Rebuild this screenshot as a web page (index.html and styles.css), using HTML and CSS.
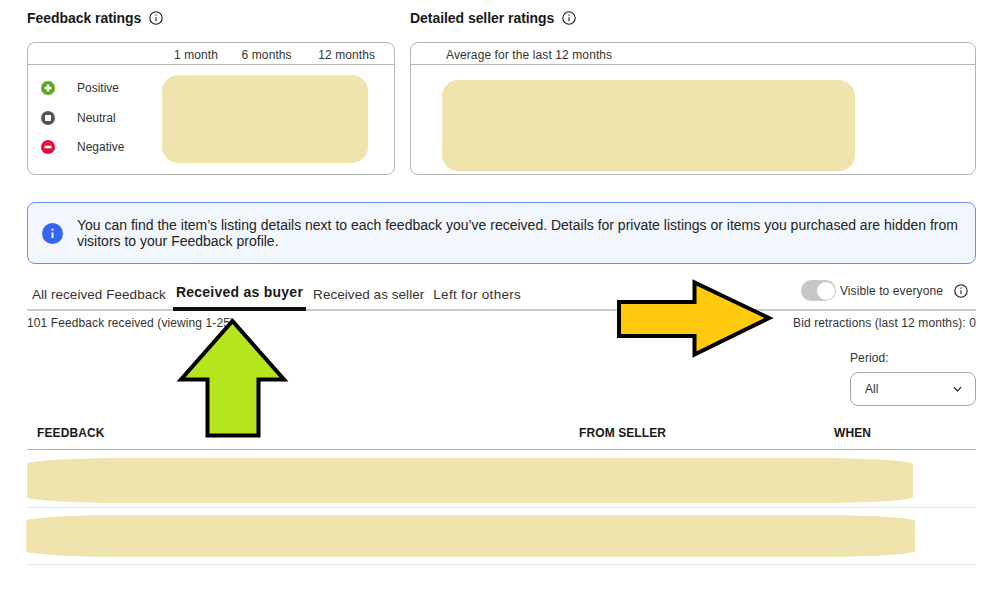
FILE: index.html
```html
<!DOCTYPE html>
<html lang="en">
<head>
    <meta charset="UTF-8">
    <meta name="viewport" content="width=device-width, initial-scale=1.0">
    <title>Feedback profile</title>
    <link rel="stylesheet" href="styles.css">
</head>
<body>
    <div class="page">
        <!-- Ratings -->
        <div class="ratings">
            <div class="rating-block">
                <h2>Feedback ratings
                    <svg class="info-icon" viewBox="0 0 14 14"><circle cx="7" cy="7" r="6.2"/><path d="M7 6.2v4M7 3.6v1.2"/></svg>
                </h2>
                <div class="card">
                    <div class="card-head period-head">
                        <span>1 month</span>
                        <span>6 months</span>
                        <span>12 months</span>
                    </div>
                    <div class="card-body feedback-body">
                        <ul class="rating-list">
                            <li>
                                <svg class="rating-icon" viewBox="0 0 14 14"><circle cx="7" cy="7" r="7" fill="#5ba71b"/><path d="M7 3.5v7M3.5 7h7" stroke="#fff" stroke-width="2.6"/></svg>
                                Positive
                            </li>
                            <li>
                                <svg class="rating-icon" viewBox="0 0 14 14"><circle cx="7" cy="7" r="7" fill="#555"/><rect x="4" y="4" width="6" height="6" rx="1" fill="#fff"/></svg>
                                Neutral
                            </li>
                            <li>
                                <svg class="rating-icon" viewBox="0 0 14 14"><circle cx="7" cy="7" r="7" fill="#e0103a"/><path d="M3.5 7h7" stroke="#fff" stroke-width="2.6"/></svg>
                                Negative
                            </li>
                        </ul>
                        <div class="redacted feedback-redacted"></div>
                    </div>
                </div>
            </div>
            <div class="rating-block">
                <h2>Detailed seller ratings
                    <svg class="info-icon" viewBox="0 0 14 14"><circle cx="7" cy="7" r="6.2"/><path d="M7 6.2v4M7 3.6v1.2"/></svg>
                </h2>
                <div class="card">
                    <div class="card-head average-head">Average for the last 12 months</div>
                    <div class="card-body">
                        <div class="redacted seller-redacted"></div>
                    </div>
                </div>
            </div>
        </div>

        <!-- Notice -->
        <div class="notice">
            <svg class="notice-icon" viewBox="0 0 21 21"><circle cx="10.5" cy="10.5" r="10.5" fill="#3665f3"/><path d="M10.5 9.5v5.5M10.5 5.800v1.800" stroke="#fff" stroke-width="2"/></svg>
            <p>You can find the item’s listing details next to each feedback you’ve received. Details for private listings or items you purchased are hidden from visitors to your Feedback profile.</p>
        </div>

        <!-- Tabs -->
        <div class="tabs-row">
            <ul class="tabs">
                <li>All received Feedback</li>
                <li class="active">Received as buyer</li>
                <li>Received as seller</li>
                <li>Left for others</li>
            </ul>
            <div class="visibility">
                <span class="toggle"><span class="knob"></span></span>
                <span>Visible to everyone</span>
                <svg class="info-icon" viewBox="0 0 14 14"><circle cx="7" cy="7" r="6.2"/><path d="M7 6.2v4M7 3.6v1.2"/></svg>
            </div>
        </div>

        <div class="summary">
            <span>101 Feedback received (viewing 1-25)</span>
            <span>Bid retractions (last 12 months): 0</span>
        </div>

        <div class="period">
            <label for="period-select">Period:</label>
            <div class="select" id="period-select">
                <span>All</span>
                <svg viewBox="0 0 10 6"><path d="M1 1l4 4 4-4"/></svg>
            </div>
        </div>

        <!-- Feedback table -->
        <div class="table-head">
            <span class="col-feedback">FEEDBACK</span>
            <span class="col-seller">FROM SELLER</span>
            <span>WHEN</span>
        </div>
        <div class="table-row row-first"><div class="redacted redacted-line"></div></div>
        <div class="table-row row-second"><div class="redacted redacted-line"></div></div>

        <!-- Annotations drawn on top of the screenshot -->
        <svg class="annotations" viewBox="0 0 999 590">
            <path d="M207.500 435.500V379.500H181L232.500 321L284 379.500H258.500V435.500Z" fill="#b5e61d"/>
            <path d="M619 302H694.500V282.500L769 318L694.500 354.500V336H619Z" fill="#ffc90e"/>
        </svg>
    </div>
</body>
</html>
```

FILE: styles.css
```css
body {
    margin: 0;
    font-family: "Liberation Sans", Arial, sans-serif;
    color: #191919;
    background-color: white;
}

.page {
    padding: 9px 23px 0 27px;
    height: 581px;
    overflow: hidden;
}

.annotations {
    position: absolute;
    top: 0;
    left: 0;
    width: 999px;
    height: 590px;
    stroke: #000;
    stroke-width: 4;
    stroke-linejoin: miter;
}

.redacted {
    background-color: #efe3ae;
}

/* Ratings */
.ratings {
    display: flex;
    gap: 15px;
}

.rating-block:first-child {
    width: 368px;
}

.rating-block:last-child {
    flex-grow: 1;
}

.rating-block h2 {
    display: flex;
    align-items: center;
    gap: 8px;
    height: 17px;
    margin: 0 0 16px;
    font-size: 14px;
    font-weight: bold;
    letter-spacing: -0.05px;
}

.info-icon {
    width: 14px;
    height: 14px;
    flex-shrink: 0;
    fill: none;
    stroke: #191919;
    stroke-width: 1.1;
}

.card {
    height: 133px;
    box-sizing: border-box;
    border: 1px solid #b5b5b5;
    border-radius: 8px;
}

.card-head {
    height: 21px;
    line-height: 25px;
    border-bottom: 1px solid #b5b5b5;
    font-size: 12px;
    letter-spacing: 0.1px;
    color: #333;
}

.period-head {
    display: flex;
    padding-left: 146px;
    gap: 23.500px;
}

.period-head span:last-child {
    margin-left: 3px;
}

.average-head {
    padding-left: 35px;
}

.card-body {
    padding: 10px 0 0;
}

.feedback-body {
    display: flex;
}

.rating-list {
    list-style: none;
    width: 134px;
    margin: 0;
    padding: 6px 0 0 13px;
    box-sizing: border-box;
    font-size: 12px;
    color: #333;
}

.rating-list li {
    display: flex;
    align-items: center;
    gap: 22px;
    height: 14px;
    margin-bottom: 15.500px;
}

.rating-icon {
    width: 14px;
    height: 14px;
}

.feedback-redacted {
    width: 206px;
    height: 88px;
    border-radius: 16px;
}

.seller-redacted {
    width: 413px;
    height: 91px;
    margin: 5px 0 0 31px;
    border-radius: 16px;
}

/* Notice */
.notice {
    display: flex;
    align-items: center;
    gap: 14px;
    height: 62px;
    box-sizing: border-box;
    margin-top: 27px;
    padding: 0 12px 0 14px;
    background-color: #f2f7fe;
    border: 1px solid #6b8fee;
    border-radius: 8px;
}

.notice-icon {
    width: 21px;
    height: 21px;
    flex-shrink: 0;
}

.notice p {
    margin: 0;
    font-size: 14px;
    line-height: 16px;
    color: #222;
}

/* Tabs */
.tabs-row {
    display: flex;
    justify-content: space-between;
    height: 45px;
    border-bottom: 2px solid #ccc;
}

.tabs {
    display: flex;
    align-items: flex-end;
    list-style: none;
    margin: 0;
    padding: 0 0 0 1px;
    align-self: flex-end;
    gap: 3px;
    font-size: 13.500px;
    letter-spacing: 0.05px;
    color: #333;
}

.tabs li {
    padding: 0 4px 5px;
    margin-bottom: -2px;
    border-bottom: 4px solid transparent;
}

.tabs li.active {
    font-size: 14px;
    letter-spacing: 0.25px;
    font-weight: bold;
    color: #191919;
    padding: 0 3px 7px 3px;
    border-bottom-color: #111;
}

.tabs li:last-child {
    margin-left: -2px;
    letter-spacing: 0.3px;
}

.visibility {
    display: flex;
    align-items: center;
    height: 21px;
    margin-top: 16px;
    gap: 4px;
    font-size: 12px;
    letter-spacing: 0.1px;
    color: #333;
}

.visibility .info-icon {
    margin-left: 7px;
    margin-right: 8px;
}

.toggle {
    display: flex;
    justify-content: flex-end;
    align-items: center;
    width: 35px;
    height: 21px;
    box-sizing: border-box;
    background-color: #c7c7c7;
    border-radius: 11px;
}

.knob {
    width: 18px;
    height: 18px;
    margin-right: 1px;
    background-color: white;
    border-radius: 50%;
}

.summary {
    display: flex;
    justify-content: space-between;
    margin-top: 5px;
    line-height: 14px;
    font-size: 12px;
    letter-spacing: 0.1px;
    color: #333;
}

.period {
    width: 126px;
    margin: 21px 0 0 auto;
    font-size: 12px;
    letter-spacing: 0.1px;
    color: #333;
}

.period label {
    display: block;
    line-height: 14px;
    margin-bottom: 7px;
}

.select {
    display: flex;
    align-items: center;
    justify-content: space-between;
    height: 34px;
    box-sizing: border-box;
    padding: 0 13px 0 14px;
    border: 1px solid #a5a5a5;
    border-radius: 8px;
}

.select svg {
    width: 9px;
    height: 6px;
    fill: none;
    stroke: #191919;
    stroke-width: 1.3;
}

/* Feedback table */
.table-head {
    display: flex;
    height: 44px;
    box-sizing: border-box;
    padding: 20px 0 0 10px;
    border-bottom: 1px solid #b5b5b5;
    font-size: 12px;
    line-height: 14px;
    letter-spacing: 0.1px;
    font-weight: bold;
}

.col-feedback {
    width: 542px;
}

.col-seller {
    width: 255px;
}

.table-row {
    height: 58px;
    box-sizing: border-box;
    border-bottom: 1px solid #e5e5e5;
}

.row-first {
    padding-top: 8px;
}

.row-second {
    height: 57px;
    padding-top: 7px;
}

.redacted-line {
    height: 45px;
    width: 886px;
    border-radius: 100px / 6px;
}

.row-second .redacted-line {
    height: 42px;
    width: 889px;
    margin-left: -1px;
}
```
